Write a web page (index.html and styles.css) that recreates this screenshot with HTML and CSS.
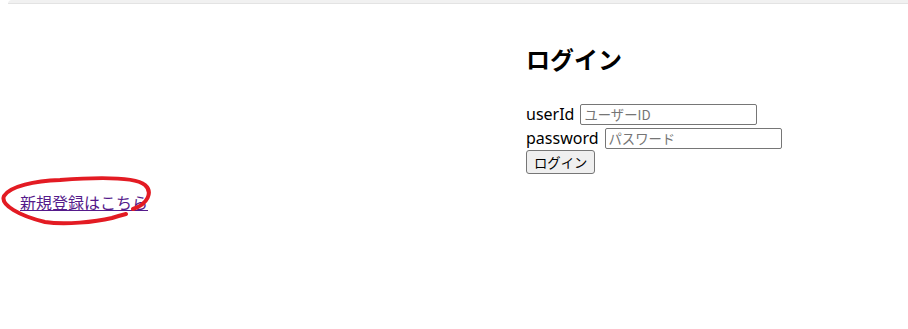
FILE: index.html
```html
<!DOCTYPE html>
<html lang="ja">
<head>
    <meta charset="UTF-8">
    <meta name="viewport" content="width=device-width, initial-scale=1.0">
    <title>ログイン</title>
    <link rel="stylesheet" href="styles.css">
</head>
<body>

<div class="topbar"></div>

<div class="page">
    <!-- Sign-up link (circled in red) -->
    <div class="left">
        <a href="#" class="signup">新規登録はこちら</a>
        <svg class="scribble" width="160" height="240" viewBox="0 0 160 240">
            <path d="M133 209 C148 204, 153 192, 145 185 C135 177, 100 177, 60 180 C35 181, 10 186, 4 196 C0 205, 20 216, 45 222 C65 225, 95 222, 112 218 C118 216, 122 215, 126 214"
                  fill="none" stroke="#e31b23" stroke-width="4" stroke-linecap="round" stroke-linejoin="round"/>
        </svg>
    </div>

    <!-- Login form -->
    <div class="right">
        <h2>ログイン</h2>
        <form class="login-form">
            <div class="row">
                <label for="userId">userId</label>
                <input type="text" id="userId" placeholder="ユーザーID">
            </div>
            <div class="row">
                <label for="password">password</label>
                <input type="password" id="password" placeholder="パスワード">
            </div>
            <div class="row">
                <button type="button">ログイン</button>
            </div>
        </form>
    </div>
</div>

</body>
</html>
```

FILE: styles.css
```css
* {
    box-sizing: border-box;
}

body {
    margin: 0;
    font-family: "Noto Sans", "Noto Sans CJK JP", sans-serif;
    font-size: 16px;
    color: #000;
    background-color: #fff;
}

.topbar {
    margin-left: 8px;
    height: 4px;
    background-color: #f1f1f1;
    border-bottom: 1px solid #e3e3e3;
    border-top-left-radius: 6px;
}

.page {
    display: flex;
    min-height: 325px;
}

.left {
    position: relative;
    width: 526px;
    padding: 188px 0 0 20px;
}

.signup {
    line-height: 20px;
    color: #551a8b;
    text-decoration: underline;
}

/* hand-drawn circle around the link */
.scribble {
    position: absolute;
    left: 0;
    top: -4px;
    overflow: visible;
}

.right {
    padding-top: 41px;
}

h2 {
    margin: 0 0 28px;
    font-size: 24px;
    line-height: 29px;
    font-weight: bold;
}

.row {
    display: flex;
    align-items: center;
    gap: 6px;
    height: 24px;
}

.row label {
    line-height: 20px;
}

.row input {
    width: 177px;
    height: 21px;
    padding: 1px 3px;
    border: 1px solid #767676;
    border-radius: 2px;
    font-family: "Noto Sans CJK JP", sans-serif;
    font-size: 13.33px;
}

.row input::placeholder {
    color: #757575;
}

.row button {
    height: 24px;
    padding: 0 7px;
    background-color: #efefef;
    border: 1px solid #767676;
    border-radius: 3px;
    font-family: "Noto Sans CJK JP", sans-serif;
    font-size: 13.33px;
    color: #000;
}
```
